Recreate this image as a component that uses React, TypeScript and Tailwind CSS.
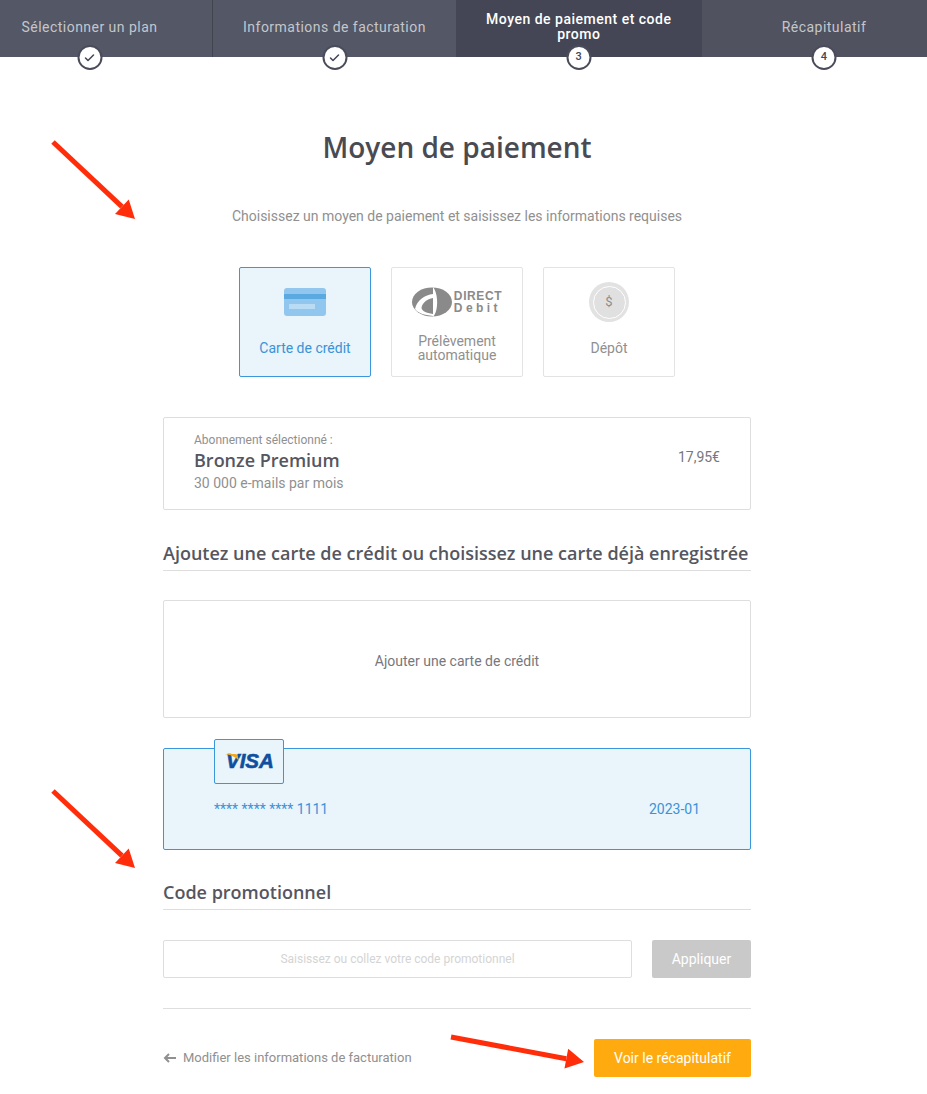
import React from "react";
import { Check } from "lucide-react";

const steps = [
  { label: "Sélectionner un plan", done: true, bg: "bg-[#535766]", width: "w-[246px] border-r border-[#41434f]" },
  { label: "Informations de facturation", done: true, bg: "bg-[#535766]", width: "w-[243px]" },
  { label: "Moyen de paiement et code promo", num: "3", active: true, bg: "bg-[#444655]", width: "w-[245.5px]" },
  { label: "Récapitulatif", num: "4", bg: "bg-[#50525f]", width: "w-[245px]" },
];

const Arrow = ({ x1, y1, x2, y2 }: { x1: number; y1: number; x2: number; y2: number }) => {
  // head is drawn from the tip back along the line
  const a = Math.atan2(y2 - y1, x2 - x1);
  const bx = x2 - 18 * Math.cos(a);
  const by = y2 - 18 * Math.sin(a);
  const nx = -Math.sin(a) * 10;
  const ny = Math.cos(a) * 10;
  return (
    <svg className="absolute left-0 top-0 pointer-events-none" width="927" height="1094">
      <line x1={x1} y1={y1} x2={bx} y2={by} stroke="#ff2d0a" strokeWidth="5" />
      <polygon points={`${x2},${y2} ${bx + nx},${by + ny} ${bx - nx},${by - ny}`} fill="#ff2d0a" />
    </svg>
  );
};

const CardIcon = () => (
  <svg width="42" height="28" viewBox="0 0 42 28">
    <rect width="42" height="28" rx="3" fill="#91c6ee" />
    <rect y="6" width="42" height="5" fill="#5aa9e0" />
    <rect x="5" y="16" width="26" height="5" fill="#b9dbf4" />
  </svg>
);

const DirectDebitLogo = () => (
  <div className="flex items-center">
    <svg width="40" height="30" viewBox="0 0 40 30">
      <ellipse cx="20" cy="15" rx="20" ry="14.5" fill="#8a8a8a" />
      <path d="M3 22 C5 13 13 8 21 7 L21 11 C15 12 10 16 9.5 21 C10 24 14 26 21 27 L21 29 C12 28 6 26 3 22 Z" fill="#fff" />
      <path d="M21 0 C26 6 27 23 21 30 Z" fill="#fff" />
    </svg>
    <div className="ml-[2px] font-['Liberation_Sans',sans-serif] font-bold text-[12px] leading-[12px] text-[#8a8a8a]">
      <div className="tracking-[0.6px]">DIRECT</div>
      <div className="tracking-[3.4px]">Debit</div>
    </div>
  </div>
);

const DepositIcon = () => (
  <div className="w-10 h-10 rounded-full bg-[#e2e2e2] flex items-center justify-center">
    <div className="w-[33px] h-[33px] rounded-full border border-white bg-[#e0e0e0] flex items-center justify-center text-[13px] text-[#8d8d8d]">
      $
    </div>
  </div>
);

const SectionTitle = ({ children }: { children: React.ReactNode }) => (
  <h2 className="font-['Open_Sans',sans-serif] font-semibold text-[18px] leading-[24px] text-[#55565f] pb-[5px] border-b border-[#dedede]">
    {children}
  </h2>
);

export default function App() {
  return (
    <div className="relative w-[927px] h-[1094px] overflow-hidden bg-white font-['Roboto',sans-serif]">
      {/* Steps */}
      <div className="flex h-[57px] ml-[-33px] w-[980px]">
        {steps.map((s) => (
          <div key={s.label} className={`relative h-full flex justify-center pt-[12px] ${s.width} ${s.bg}`}>
            <div
              className={`text-center text-[14px] leading-[15px] ${
                s.active
                  ? "w-[200px] font-medium tracking-[0.5px] text-white"
                  : "mt-[8px] tracking-[0.47px] text-[#c5c6cb]"
              }`}
            >
              {s.label}
            </div>
            <div className="absolute left-1/2 top-[45px] -translate-x-1/2 w-[25px] h-[25px] rounded-full bg-white border-2 border-[#4a4c5a] flex items-center justify-center text-[11px] font-medium text-[#444655]">
              {s.done ? <Check size={12} strokeWidth={3} /> : s.num}
            </div>
          </div>
        ))}
      </div>

      <div className="ml-[163px] w-[588px]">
        <h1 className="mt-[72px] text-center font-['Open_Sans',sans-serif] font-semibold text-[28px] leading-[36px] text-[#4a4b52]">
          Moyen de paiement
        </h1>
        <p className="mt-[41px] text-center text-[14px] leading-[20px] text-[#909090]">
          Choisissez un moyen de paiement et saisissez les informations requises
        </p>

        {/* Payment methods */}
        <div className="mt-[41px] flex justify-center gap-5">
          <div className="w-[132px] h-[110px] rounded-[2px] border border-[#3a97dc] bg-[#e9f4fb] flex flex-col items-center pt-[20px]">
            <CardIcon />
            <span className="mt-[25px] text-[14px] leading-[14px] text-[#3a93d6]">Carte de crédit</span>
          </div>
          <div className="w-[132px] h-[110px] rounded-[2px] border border-[#e3e3e3] flex flex-col items-center pt-[19px]">
            <DirectDebitLogo />
            <span className="mt-[17px] text-center text-[14px] leading-[14px] text-[#909090]">
              Prélèvement
              <br />
              automatique
            </span>
          </div>
          <div className="w-[132px] h-[110px] rounded-[2px] border border-[#e3e3e3] flex flex-col items-center pt-[14px]">
            <DepositIcon />
            <span className="mt-[19px] text-[14px] leading-[14px] text-[#909090]">Dépôt</span>
          </div>
        </div>

        {/* Selected plan */}
        <div className="mt-[40px] h-[93px] rounded-[2px] border border-[#dedede] flex justify-between px-[30px] pt-[15px]">
          <div>
            <div className="text-[12px] leading-[14px] text-[#909090]">Abonnement sélectionné :</div>
            <div className="mt-[1px] font-['Open_Sans',sans-serif] font-semibold text-[18px] leading-[24px] text-[#55565f]">
              Bronze Premium
            </div>
            <div className="mt-[2px] text-[14px] leading-[18px] text-[#909090]">30 000 e-mails par mois</div>
          </div>
          <div className="mt-[14px] text-[14px] leading-[20px] text-[#77777d]">17,95€</div>
        </div>

        <div className="mt-[31px]">
          <SectionTitle>Ajoutez une carte de crédit ou choisissez une carte déjà enregistrée</SectionTitle>
        </div>

        {/* Saved cards */}
        <div className="mt-[29px] h-[118px] rounded-[2px] border border-[#dedede] flex items-center justify-center text-[14px] text-[#77777d]">
          <span className="mt-[5px]">Ajouter une carte de crédit</span>
        </div>

        <div className="relative mt-[30px] h-[102px] rounded-[2px] border border-[#3a97dc] bg-[#e9f4fb] text-[14px] text-[#3a93d6]">
          <div className="absolute left-[50px] top-[-10px] w-[70px] h-[45px] rounded-[2px] border border-[#3a97dc] bg-[#e9f4fb]">
            <span className="absolute left-[11px] top-[9px] font-['Liberation_Sans',sans-serif] italic font-bold text-[20.5px] leading-[24px] text-[#0f4f9f] [-webkit-text-stroke:0.6px_#0f4f9f]">
              VISA
            </span>
            <svg className="absolute left-[10px] top-[14px]" width="14" height="8" viewBox="0 0 14 8">
              <path d="M0 0 L10 0 C12 0 13 1 13 3 L14 7 C11 3 6 1 0 0 Z" fill="#f0a81e" />
            </svg>
          </div>
          <div className="flex justify-between px-[50px] pt-[50px] leading-[20px]">
            <span>**** **** **** 1111</span>
            <span>2023-01</span>
          </div>
        </div>

        {/* Promo code */}
        <div className="mt-[30px]">
          <SectionTitle>Code promotionnel</SectionTitle>
        </div>
        <div className="mt-[30px] flex justify-between">
          <div className="w-[469px] h-[38px] rounded-[2px] border border-[#dedede] flex items-center justify-center text-[12px] text-[#d4d4d4]">
            Saisissez ou collez votre code promotionnel
          </div>
          <div className="w-[99px] h-[38px] rounded-[2px] bg-[#c9c9c9] flex items-center justify-center text-[14px] text-white">
            Appliquer
          </div>
        </div>

        <div className="mt-[30px] border-t border-[#dedede] pt-[30px] flex items-center justify-between">
          <div className="flex items-center text-[13px] text-[#909090]">
            <svg className="mr-[7px]" width="13" height="10" viewBox="0 0 13 10" fill="none" stroke="#909090" strokeWidth="2">
              <path d="M13 5H2M6 1L2 5L6 9" />
            </svg>
            Modifier les informations de facturation
          </div>
          <div className="w-[157px] h-[38px] rounded-[2px] bg-[#ffab0f] flex items-center justify-center text-[14px] text-white">
            Voir le récapitulatif
          </div>
        </div>
      </div>

      <Arrow x1={53} y1={142} x2={135} y2={219} />
      <Arrow x1={53} y1={791} x2={135} y2={868} />
      <Arrow x1={451} y1={1037} x2={584} y2={1062} />
    </div>
  );
}
